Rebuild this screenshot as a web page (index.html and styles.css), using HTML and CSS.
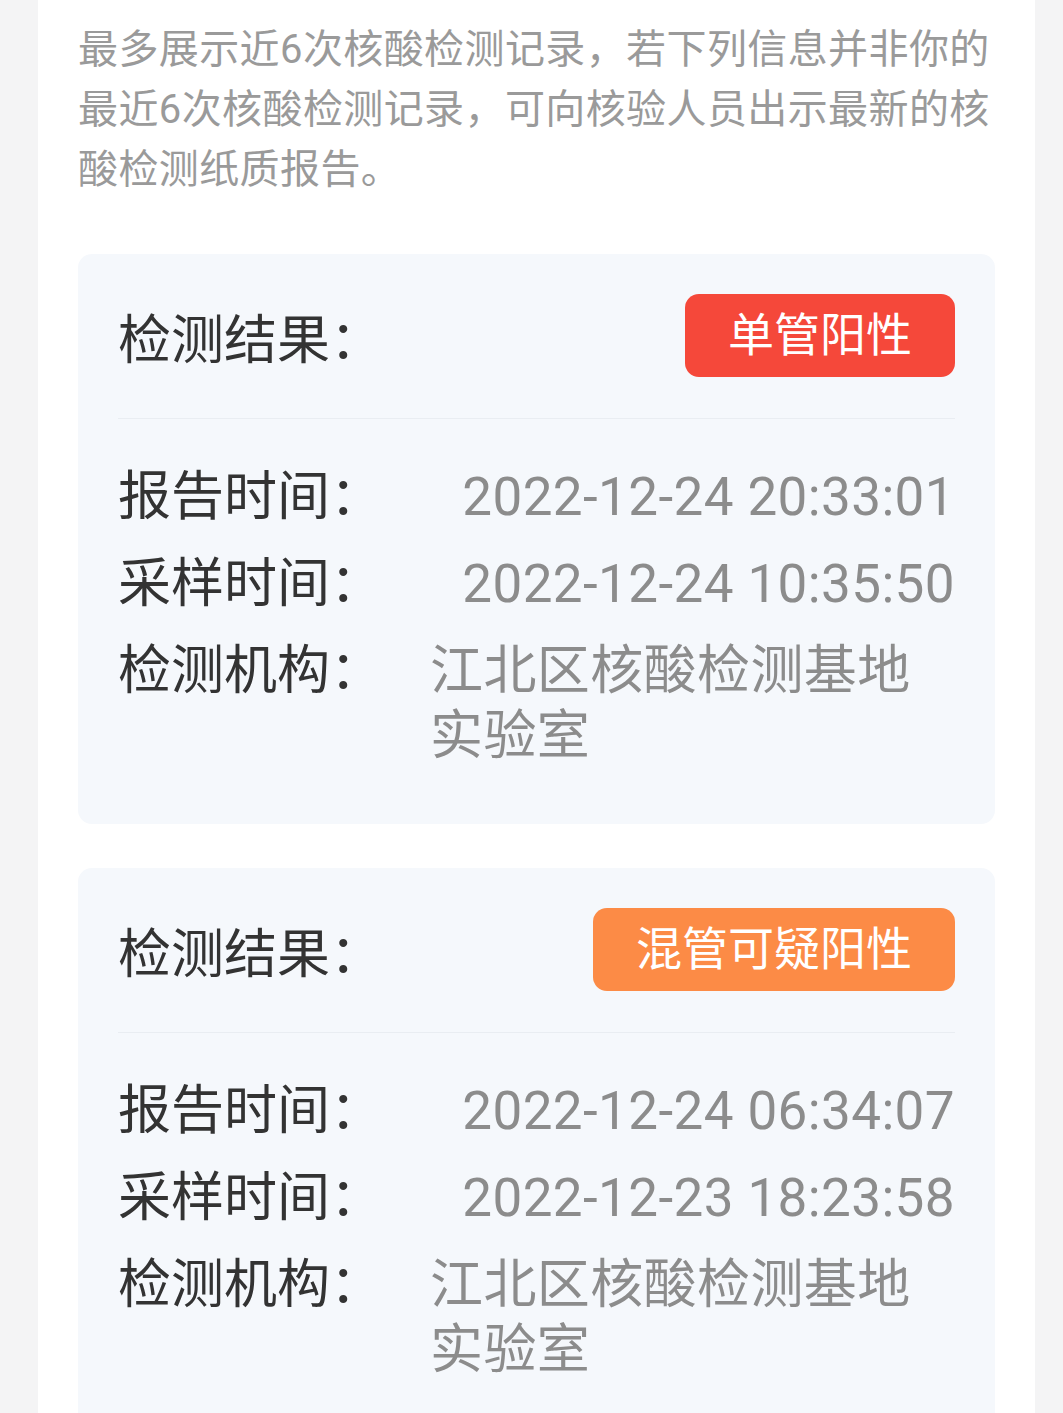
FILE: index.html
```html
<!DOCTYPE html>
<html lang="zh-CN">
<head>
    <meta charset="UTF-8">
    <meta name="viewport" content="width=device-width, initial-scale=1.0">
    <link rel="stylesheet" href="styles.css">
    <title>核酸检测记录</title>
</head>
<body>

    <div class="panel">
        <p class="intro">最多展示近6次核酸检测记录，若下列信息并非你的最近6次核酸检测记录，可向核验人员出示最新的核酸检测纸质报告。</p>

        <div class="record">
            <div class="record-head">
                <span class="record-title">检测结果：</span>
                <span class="badge badge-red">单管阳性</span>
            </div>
            <div class="record-rows">
                <div class="row">
                    <span class="row-label">报告时间：</span>
                    <span class="row-value">2022-12-24 20:33:01</span>
                </div>
                <div class="row">
                    <span class="row-label">采样时间：</span>
                    <span class="row-value">2022-12-24 10:35:50</span>
                </div>
                <div class="row">
                    <span class="row-label">检测机构：</span>
                    <span class="row-value row-value-left">江北区核酸检测基地实验室</span>
                </div>
            </div>
        </div>

        <div class="record">
            <div class="record-head">
                <span class="record-title">检测结果：</span>
                <span class="badge badge-orange">混管可疑阳性</span>
            </div>
            <div class="record-rows">
                <div class="row">
                    <span class="row-label">报告时间：</span>
                    <span class="row-value">2022-12-24 06:34:07</span>
                </div>
                <div class="row">
                    <span class="row-label">采样时间：</span>
                    <span class="row-value">2022-12-23 18:23:58</span>
                </div>
                <div class="row">
                    <span class="row-label">检测机构：</span>
                    <span class="row-value row-value-left">江北区核酸检测基地实验室</span>
                </div>
            </div>
        </div>
    </div>

</body>
</html>
```

FILE: styles.css
```css
body {
    margin: 0;
    background-color: #f4f4f5;
    font-family: Roboto, "Noto Sans CJK SC", sans-serif;
}

.panel {
    background-color: #ffffff;
    margin: 0 28px 0 38px;
    padding: 20px 40px 40px;
}

.intro {
    margin: 0 0 54px;
    font-size: 40px;
    line-height: 60px;
    letter-spacing: 0.4px;
    color: #9a9a9a;
}

.record {
    background-color: #f5f8fc;
    border-radius: 14px;
    padding: 40px 40px 55px;
    margin-bottom: 44px;
}

.record-head {
    display: flex;
    justify-content: space-between;
    align-items: center;
    padding-bottom: 41px;
    border-bottom: 1px solid #e9edf2;
}

.record-title {
    font-size: 53px;
    color: #333333;
}

.badge {
    color: #ffffff;
    font-size: 46px;
    line-height: 83px;
    padding: 0 43px;
    border-radius: 14px;
}

.badge-red {
    background-color: #f5483a;
}

.badge-orange {
    background-color: #fc8b46;
}

.record-rows {
    display: flex;
    flex-direction: column;
    gap: 22px;
    padding-top: 46px;
}

.row {
    display: flex;
    font-size: 53px;
    line-height: 65px;
}

.row-label {
    flex: 0 0 312px;
    color: #333333;
}

.row-value {
    flex: 1;
    text-align: right;
    letter-spacing: 0.4px;
    color: #8c8c8c;
}

.row-value-left {
    text-align: left;
}
```
